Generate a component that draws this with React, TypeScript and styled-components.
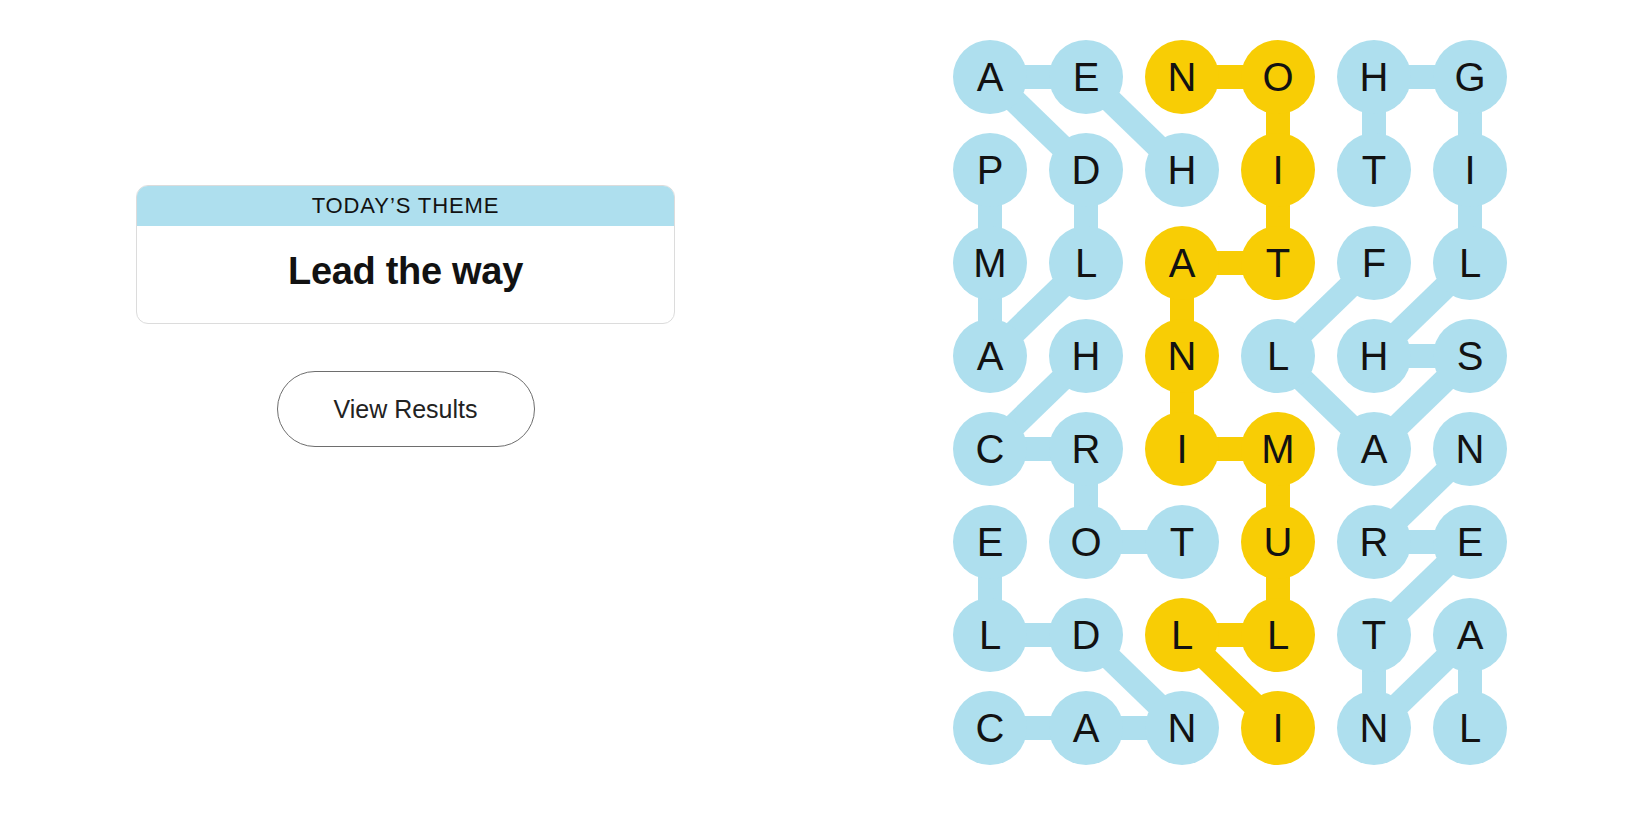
import React from 'react'
import styled, { createGlobalStyle } from 'styled-components'

const CELL = 74
const COL_GAP = 22
const ROW_GAP = 19
const BLUE = '#aedfee'
const YELLOW = '#f8cd05'

const LETTERS = [
  'AENOHG',
  'PDHITI',
  'MLATFL',
  'AHNLHS',
  'CRIMAN',
  'EOTURE',
  'LDLLTA',
  'CANINL',
]

type Cell = [number, number]

interface Word {
  path: Cell[]
  spangram?: boolean
}

const WORDS: Word[] = [
  // HEADLAMP
  { path: [[1, 2], [0, 1], [0, 0], [1, 1], [2, 1], [3, 0], [2, 0], [1, 0]] },
  // FLASHLIGHT
  { path: [[2, 4], [3, 3], [4, 4], [3, 5], [3, 4], [2, 5], [1, 5], [0, 5], [0, 4], [1, 4]] },
  // LANTERN
  { path: [[7, 5], [6, 5], [7, 4], [6, 4], [5, 5], [5, 4], [4, 5]] },
  // TORCH
  { path: [[5, 2], [5, 1], [4, 1], [4, 0], [3, 1]] },
  // CANDLE
  { path: [[7, 0], [7, 1], [7, 2], [6, 1], [6, 0], [5, 0]] },
  // ILLUMINATION
  { path: [[7, 3], [6, 2], [6, 3], [5, 3], [4, 3], [4, 2], [3, 2], [2, 2], [2, 3], [1, 3], [0, 3], [0, 2]], spangram: true },
]

const spangramCells = new Set(
  WORDS.filter((w) => w.spangram).flatMap((w) => w.path.map(([r, c]) => `${r}-${c}`))
)

const cx = (c: number) => c * (CELL + COL_GAP) + CELL / 2
const cy = (r: number) => r * (CELL + ROW_GAP) + CELL / 2

const BOARD_W = 6 * CELL + 5 * COL_GAP
const BOARD_H = 8 * CELL + 7 * ROW_GAP

const GlobalStyle = createGlobalStyle`
  html, body {
    margin: 0;
    padding: 0;
    background: #ffffff;
    font-family: "Liberation Sans", Arial, sans-serif;
    color: #121212;
  }
`

const Page = styled.div`
  display: flex;
  align-items: flex-start;
  width: 1650px;
  height: 825px;
  padding: 40px 0 0 136px;
  box-sizing: border-box;
`

const SidePanel = styled.div`
  width: 539px;
  flex-shrink: 0;
  margin-top: 145px;
  display: flex;
  flex-direction: column;
  align-items: center;
`

const ThemeCard = styled.section`
  width: 100%;
  border: 1px solid #dcdcdc;
  border-radius: 12px;
  overflow: hidden;
  box-sizing: border-box;
`

const ThemeHeader = styled.h2`
  margin: 0;
  height: 40px;
  background: ${BLUE};
  display: flex;
  align-items: center;
  justify-content: center;
  font-size: 22px;
  font-weight: 400;
  letter-spacing: 0.9px;
  text-transform: uppercase;
  color: #121212;
`

const ThemeBody = styled.div`
  height: 97px;
  display: flex;
  align-items: center;
  justify-content: center;
  padding-bottom: 6px;
  box-sizing: border-box;
`

const ThemeTitle = styled.h1`
  margin: 0;
  font-size: 38px;
  font-weight: 700;
  letter-spacing: -0.3px;
  color: #121212;
`

const ResultsButton = styled.button`
  margin-top: 47px;
  width: 258px;
  height: 76px;
  border-radius: 38px;
  border: 1px solid #6e6e6e;
  background: #ffffff;
  font-family: "Liberation Sans", Arial, sans-serif;
  font-size: 25px;
  color: #222222;
  cursor: pointer;
`

const Board = styled.div`
  position: relative;
  flex-shrink: 0;
  margin-left: 278px;
  width: ${BOARD_W}px;
  height: ${BOARD_H}px;
  display: grid;
  grid-template-columns: repeat(6, ${CELL}px);
  grid-auto-rows: ${CELL}px;
  column-gap: ${COL_GAP}px;
  row-gap: ${ROW_GAP}px;
`

const Links = styled.svg`
  position: absolute;
  inset: 0;
  z-index: 0;
  pointer-events: none;
`

const LetterButton = styled.button<{ $found: 'word' | 'spangram' }>`
  position: relative;
  z-index: 1;
  width: ${CELL}px;
  height: ${CELL}px;
  border-radius: 50%;
  border: none;
  padding: 0;
  background: ${(p) => (p.$found === 'spangram' ? YELLOW : BLUE)};
  font-family: "Liberation Sans", Arial, sans-serif;
  font-size: 40px;
  font-weight: 400;
  color: #121212;
  display: flex;
  align-items: center;
  justify-content: center;
`

const App: React.FC = () => {
  return (
    <>
      <GlobalStyle />
      <Page>
        <SidePanel>
          <ThemeCard>
            <ThemeHeader>Today’s Theme</ThemeHeader>
            <ThemeBody>
              <ThemeTitle>Lead the way</ThemeTitle>
            </ThemeBody>
          </ThemeCard>
          <ResultsButton>View Results</ResultsButton>
        </SidePanel>

        <Board>
          <Links width={BOARD_W} height={BOARD_H} viewBox={`0 0 ${BOARD_W} ${BOARD_H}`}>
            {WORDS.map((word, wi) =>
              word.path.slice(1).map(([r, c], i) => {
                const [pr, pc] = word.path[i]
                return (
                  <line
                    key={`${wi}-${i}`}
                    x1={cx(pc)}
                    y1={cy(pr)}
                    x2={cx(c)}
                    y2={cy(r)}
                    stroke={word.spangram ? YELLOW : BLUE}
                    strokeWidth={24}
                  />
                )
              })
            )}
          </Links>
          {LETTERS.map((row, r) =>
            row.split('').map((ch, c) => (
              <LetterButton
                key={`${r}-${c}`}
                $found={spangramCells.has(`${r}-${c}`) ? 'spangram' : 'word'}
              >
                {ch}
              </LetterButton>
            ))
          )}
        </Board>
      </Page>
    </>
  )
}

export default App
